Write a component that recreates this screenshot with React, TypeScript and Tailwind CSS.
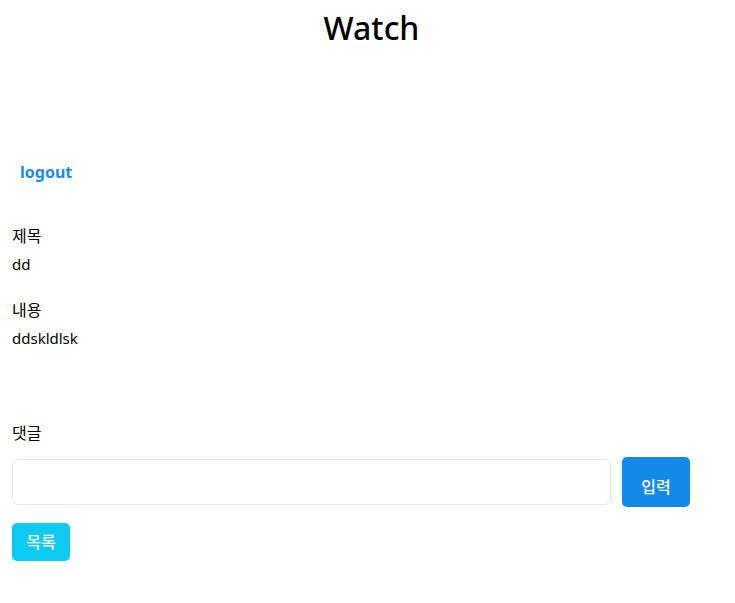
export default function App() {
  return (
    <div className="w-[735px] min-h-[603px] bg-white text-black" style={{ fontFamily: '"Noto Sans", "Noto Sans CJK KR", sans-serif' }}>
      <div className="pt-[6px] flex justify-center pl-[8px]">
        <h1 className="text-[32px] leading-[44px] font-medium">Watch</h1>
      </div>
      <div className="pt-[110px] pl-[20px]">
        <span className="text-[16px] leading-[22px] font-bold text-[#1a8be9]">logout</span>
      </div>
      <div className="pl-[12px] pt-[41px]">
        <div className="text-[16px] leading-[22px] font-normal">제목</div>
        <div className="text-[15px] leading-[22px] mt-[6px]">dd</div>
        <div className="text-[16px] leading-[22px] font-normal mt-[24px]">내용</div>
        <div className="text-[15px] leading-[22px] mt-[6px]">ddskldlsk</div>
        <div className="text-[16px] leading-[22px] font-normal mt-[73px]">댓글</div>
        <div className="flex items-center gap-[11px] mt-[13px]">
          <input className="w-[599px] h-[46px] border border-[#e5e7eb] rounded-[6px] outline-none px-3" />
          <button className="w-[68px] h-[50px] bg-[#138ae8] rounded-[5px] text-white text-[16px] font-medium pt-[10px]">입력</button>
        </div>
        <button className="mt-[16px] w-[58px] h-[38px] bg-[#0dcaf0] rounded-[5px] text-white text-[16px] font-medium">목록</button>
      </div>
    </div>
  );
}
